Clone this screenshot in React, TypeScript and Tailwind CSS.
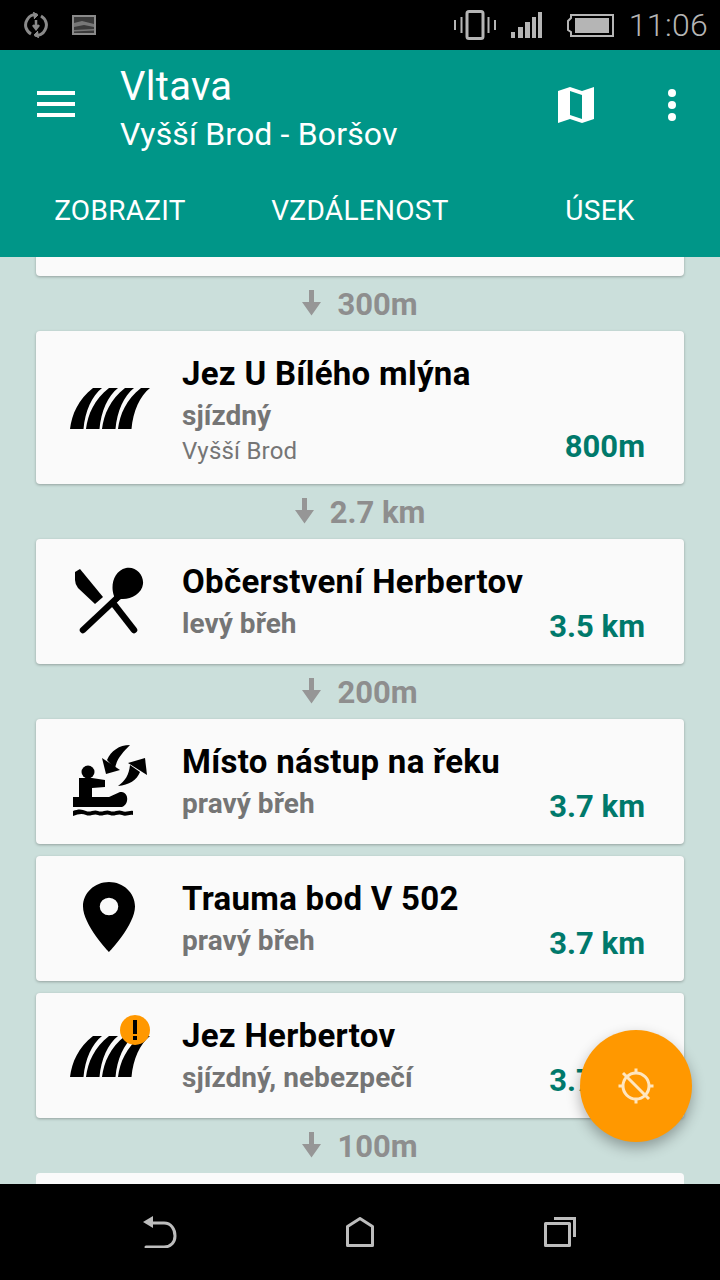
import type { ReactNode } from 'react';

type Stop = {
  title: string;
  bank: string;
  place?: string;
  distance: string;
  icon: ReactNode;
  warning?: boolean;
};

const Weir = () => (
  <svg className="ml-[2px]" width="80" height="42" viewBox="0 0 80 42" fill="#000">
    {[0, 16, 32, 48].map((x) => (
      <path key={x} transform={`translate(${x} 0)`} d="M0 42C2 27 8 13 23 1L32 1C22 9 15 24 13.5 42Z" />
    ))}
  </svg>
);

const Cutlery = () => (
  <svg className="-mt-[2px]" width="70" height="68" viewBox="0 -2 70 68" fill="#000">
    <path d="M40 27C36 16 40 2 52 -1C62 -3 70 6 69 15C68 25 56 31 47 30L44 32L40 31Z" />
    <path d="M42 30L9 61" stroke="#000" strokeWidth="6.5" strokeLinecap="round" />
    <path d="M1 3L6 0L29 28L21 35L4 19Q1 15 1 11Z" />
    <path d="M39 34L60 61" stroke="#000" strokeWidth="6.5" strokeLinecap="round" />
  </svg>
);

const Launch = () => (
  <svg width="76" height="74" viewBox="0 0 76 74" fill="#000">
    <circle cx="17" cy="27" r="6.5" />
    <path d="M8 33H21L34 35V42L21 43V53H8Z" />
    <path d="M2 52H38L49 47C55 46 57 52 56 56C55 60 52 62 50 62H2Z" />
    <path d="M2 66C7 64 11 64 15 66C19 68 23 64 27 66C31 68 35 64 39 66C43 68 47 64 51 66C55 68 59 65 62 66V70C58 69 55 72 51 70C47 68 43 72 39 70C35 68 31 72 27 70C23 68 19 72 15 70C11 68 7 69 2 71Z" />
    <path d="M31 13L35 29L49 25Z" />
    <path d="M59 0C48 0 40 6 36 15L44 24C45 15 51 8 59 0Z" />
    <path d="M57 18L74 13L76 30Z" />
    <path d="M47 41C54 36 58 30 59 20L69 27C66 35 58 40 47 41Z" />
  </svg>
);

const Pin = () => (
  <svg className="-mt-[4px]" width="52" height="70" viewBox="5 2 14 20" preserveAspectRatio="none" fill="#000">
    <path d="M12 2C8.13 2 5 5.13 5 9c0 5.25 7 13 7 13s7-7.75 7-13c0-3.87-3.13-7-7-7zm0 9.5a2.5 2.5 0 010-5 2.5 2.5 0 010 5z" />
  </svg>
);

const ArrowDown = () => (
  <svg className="-mt-[2px]" width="19" height="26" viewBox="0 0 19 26" fill="#969696">
    <path d="M7 0H12V12H19L9.5 25.5L0 12H7Z" />
  </svg>
);

const StatusBar = () => (
  <div className="flex h-[50px] items-center bg-black pl-[24px] pr-[12px]">
    <svg width="24" height="26" viewBox="0 0 24 26" fill="none" stroke="#8a8a8a" strokeWidth="3">
      <path d="M7 22C2 19 0 13 3 8C5 4 9 2 13 3" />
      <path d="M17 4C22 7 24 13 21 18C19 22 15 24 11 23" />
      <path d="M9 0L14 3L10 7" fill="#8a8a8a" strokeWidth="1" />
      <path d="M15 26L10 23L14 19" fill="#8a8a8a" strokeWidth="1" />
      <path d="M12 8V15M9 13L12 17L15 13" strokeWidth="2.5" />
    </svg>
    <svg className="ml-[24px]" width="24" height="20" viewBox="0 0 24 20">
      <rect x="1" y="1" width="22" height="18" fill="#3a3a3a" stroke="#8a8a8a" strokeWidth="2" />
      <path d="M2 8L10 6L22 9V12L12 10L2 12Z" fill="#777" />
      <path d="M2 15L22 14V15.5L2 16.5Z" fill="#777" />
    </svg>
    <svg className="ml-auto" width="42" height="30" viewBox="0 0 42 30" fill="none" stroke="#b5b5b5">
      <rect x="13" y="1.5" width="16" height="27" rx="2" strokeWidth="3" />
      <path d="M7.5 7V23M1 10V20M34.5 7V23M41 10V20" strokeWidth="2" />
    </svg>
    <svg className="ml-[15px]" width="31" height="26" viewBox="0 0 31 26" fill="#b5b5b5">
      <rect x="0" y="20" width="4" height="6" />
      <rect x="7" y="15" width="5" height="11" />
      <rect x="14" y="10" width="5" height="16" />
      <rect x="21" y="5" width="4" height="21" />
      <rect x="27" y="0" width="4" height="26" />
    </svg>
    <svg className="ml-[25px]" width="47" height="24" viewBox="0 0 47 24" fill="none" stroke="#b5b5b5" strokeWidth="2">
      <path d="M4 5V2H46V23H4V19L1 17V8Z" />
      <rect x="8" y="5" width="34" height="15" fill="#b5b5b5" stroke="none" />
    </svg>
    <span className="ml-[15px] text-[32px] font-light leading-none tracking-[0.3px] text-[#b5b5b5]">11:06</span>
  </div>
);

const Toolbar = () => (
  <header className="bg-[#009688] text-white">
    <div className="flex h-[132px] items-start">
      <div className="flex w-[120px] flex-col gap-[7px] pl-[37px] pt-[41px]">
        <div className="h-[4px] w-[38px] bg-white" />
        <div className="h-[4px] w-[38px] bg-white" />
        <div className="h-[4px] w-[38px] bg-white" />
      </div>
      <div className="flex-1 pt-[13px]">
        <div className="text-[40px] leading-[48px] tracking-[0.3px]">Vltava</div>
        <div className="text-[32px] leading-[46px] tracking-[0.15px]">Vyšší Brod - Boršov</div>
      </div>
      <svg className="mt-[37px]" width="36" height="36" viewBox="0 0 36 36" fill="#fff">
        <path fillRule="evenodd" d="M0 4L12 0L24 4L36 0V32L24 36L12 32L0 36ZM12 4V28L24 32V8Z" />
      </svg>
      <div className="ml-[74px] mr-[44px] mt-[39px] flex flex-col gap-[4px]">
        <div className="size-[8px] rounded-full bg-white" />
        <div className="size-[8px] rounded-full bg-white" />
        <div className="size-[8px] rounded-full bg-white" />
      </div>
    </div>
    <div className="grid h-[75px] grid-cols-3 pt-[1px] text-center text-[28px] leading-[56px] tracking-[0.3px]">
      <div>ZOBRAZIT</div>
      <div>VZDÁLENOST</div>
      <div>ÚSEK</div>
    </div>
  </header>
);

const StopCard = ({ stop }: { stop: Stop }) => (
  <div className="mx-[36px] flex rounded-[4px] bg-[#fafafa] pb-[20px] pr-[39px] pt-[21px] shadow-[0_1px_3px_rgba(0,0,0,0.28)]">
    <div className="relative flex h-[84px] w-[146px] shrink-0 items-center justify-center self-center">
      {stop.icon}
      {stop.warning && (
        <div className="absolute left-[84px] top-[1px] flex size-[30px] flex-col items-center justify-center gap-[2px] rounded-full bg-[#ff9800]">
          <div className="h-[14px] w-[4px] bg-black" />
          <div className="h-[4px] w-[4px] bg-black" />
        </div>
      )}
    </div>
    <div className="min-w-0 flex-1">
      <div className="pt-[1px] text-[33px] font-bold leading-[41px] tracking-[0.3px] text-black">{stop.title}</div>
      <div className="pt-[1px] text-[28px] font-bold leading-[41px] tracking-[0.05px] text-[#757575]">{stop.bank}</div>
      {stop.place && <div className="pt-[2px] text-[24px] leading-[26px] tracking-[0.2px] text-[#757575]">{stop.place}</div>}
    </div>
    <div className="-mb-[1px] self-end text-[31px] font-bold leading-[36px] text-[#00796b]">{stop.distance}</div>
  </div>
);

const Gap = ({ label }: { label: string }) => (
  <div className="flex h-[55px] items-center justify-center gap-[16px] text-[31px] font-bold text-[#8e8e8e]">
    <ArrowDown />
    <span className="pt-[4px]">{label}</span>
  </div>
);

const stops: Stop[] = [
  { title: 'Jez U Bílého mlýna', bank: 'sjízdný', place: 'Vyšší Brod', distance: '800m', icon: <Weir /> },
  { title: 'Občerstvení Herbertov', bank: 'levý břeh', distance: '3.5 km', icon: <Cutlery /> },
  { title: 'Místo nástup na řeku', bank: 'pravý břeh', distance: '3.7 km', icon: <Launch /> },
  { title: 'Trauma bod V 502', bank: 'pravý břeh', distance: '3.7 km', icon: <Pin /> },
  { title: 'Jez Herbertov', bank: 'sjízdný, nebezpečí', distance: '3.7 km', icon: <Weir />, warning: true },
];

const NavBar = () => (
  <nav className="grid h-[96px] grid-cols-3 items-center bg-black pb-[2px]">
    <svg className="ml-[143px] mt-[2px]" width="34" height="32" viewBox="0 0 34 32" fill="none" stroke="#bdbdbd" strokeWidth="3">
      <path d="M3 31H21C28 31 32 26 32 20C32 13 28 7 21 7H8" strokeLinecap="round" />
      <path d="M10 0V12L0 6Z" fill="#bdbdbd" stroke="none" />
    </svg>
    <svg className="mx-auto mt-[2px]" width="28" height="30" viewBox="0 0 28 30" fill="none" stroke="#bdbdbd" strokeWidth="3">
      <path d="M1.5 28.5V9.5L14 1.5L26.5 9.5V28.5Z" strokeLinejoin="round" />
    </svg>
    <svg className="ml-[64px] mt-[2px]" width="32" height="30" viewBox="0 0 32 30" fill="none" stroke="#bdbdbd" strokeWidth="3">
      <rect x="1.5" y="6.5" width="24" height="22" strokeLinejoin="round" />
      <path d="M10 1.5H30.5V20" />
    </svg>
  </nav>
);

export default function App() {
  return (
    <div className="relative flex h-[1280px] w-[720px] flex-col overflow-hidden bg-black font-['Roboto',sans-serif]">
      <StatusBar />
      <Toolbar />
      <main className="min-h-0 flex-1 overflow-hidden bg-[#cbdfdb]">
        {/* list is scrolled, so the first card only shows its lower edge */}
        <div className="mx-[36px] -mt-[4px] h-[23px] rounded-[4px] bg-[#fafafa] shadow-[0_1px_3px_rgba(0,0,0,0.28)]" />
        <Gap label="300m" />
        <StopCard stop={stops[0]} />
        <Gap label="2.7 km" />
        <StopCard stop={stops[1]} />
        <Gap label="200m" />
        <div className="flex flex-col gap-[12px]">
          <StopCard stop={stops[2]} />
          <StopCard stop={stops[3]} />
          <StopCard stop={stops[4]} />
        </div>
        <Gap label="100m" />
        <div className="mx-[36px] h-[125px] rounded-[4px] bg-[#fafafa]" />
      </main>
      <NavBar />
      <button className="absolute left-[580px] top-[1030px] flex size-[112px] items-center justify-center rounded-full bg-[#ff9800] shadow-[0_6px_14px_rgba(0,0,0,0.3)]">
        <svg width="40" height="40" viewBox="0 0 40 40" fill="none" stroke="#ffe6bf" strokeWidth="3">
          <circle cx="20" cy="20" r="13" />
          <path d="M20 2.5V7M20 33V37.5M2.5 20H7M33 20H37.5" />
          <path d="M7 7L33 33" />
        </svg>
      </button>
    </div>
  );
}
